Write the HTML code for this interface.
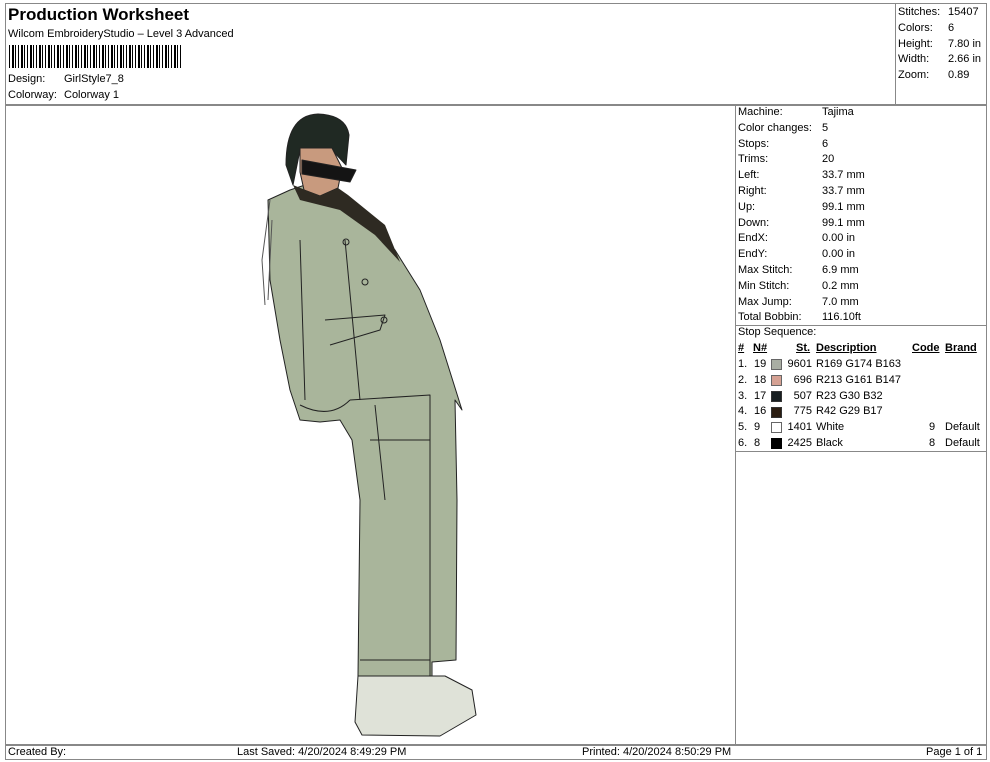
<!DOCTYPE html>
<html><head><meta charset="utf-8"><style>
body{margin:0;background:#fff;font-family:"Liberation Sans",Arial,sans-serif;color:#000}
.a{position:absolute;font-size:11px;white-space:nowrap}
.ln{position:absolute;background:#888}
</style></head><body>
<div style="position:relative;width:990px;height:762px;overflow:hidden">
<div class="ln" style="left:5px;top:3px;width:982px;height:1px"></div>
<div class="ln" style="left:5px;top:3px;width:1px;height:757px"></div>
<div class="ln" style="left:986px;top:3px;width:1px;height:757px"></div>
<div class="ln" style="left:5px;top:759px;width:982px;height:1px"></div>
<div class="ln" style="left:5px;top:104px;width:982px;height:2px"></div>
<div class="ln" style="left:895px;top:3px;width:1px;height:101px"></div>
<div class="ln" style="left:735px;top:104px;width:1px;height:641px"></div>
<div class="ln" style="left:5px;top:744px;width:982px;height:2px"></div>
<div class="ln" style="left:735px;top:325px;width:252px;height:1px"></div>
<div class="ln" style="left:735px;top:451px;width:252px;height:1px"></div>

<div class="a" style="left:8px;top:5px;font-size:17px;font-weight:bold">Production Worksheet</div>
<div class="a" style="left:8px;top:28px">Wilcom EmbroideryStudio – Level 3 Advanced</div>
<div style="position:absolute;left:9px;top:45px;width:173px;height:23px;background:repeating-linear-gradient(90deg,#000 0 1px,#fff 1px 3px,#000 3px 5px,#fff 5px 6px,#000 6px 7px,#fff 7px 9px)"></div>
<div class="a" style="left:8px;top:73px">Design:</div><div class="a" style="left:64px;top:73px">GirlStyle7_8</div>
<div class="a" style="left:8px;top:89px">Colorway:</div><div class="a" style="left:64px;top:89px">Colorway 1</div>

<div class="a" style="left:898px;top:5px;line-height:15.8px">Stitches:<br>Colors:<br>Height:<br>Width:<br>Zoom:</div>
<div class="a" style="left:948px;top:5px;line-height:15.8px">15407<br>6<br>7.80 in<br>2.66 in<br>0.89</div>

<div class="a" style="left:738px;top:105px;line-height:15.8px">Machine:<br>Color changes:<br>Stops:<br>Trims:<br>Left:<br>Right:<br>Up:<br>Down:<br>EndX:<br>EndY:<br>Max Stitch:<br>Min Stitch:<br>Max Jump:<br>Total Bobbin:</div>
<div class="a" style="left:822px;top:105px;line-height:15.8px">Tajima<br>5<br>6<br>20<br>33.7 mm<br>33.7 mm<br>99.1 mm<br>99.1 mm<br>0.00 in<br>0.00 in<br>6.9 mm<br>0.2 mm<br>7.0 mm<br>116.10ft</div>
<div class="a" style="left:738px;top:326px">Stop Sequence:</div>
<div class="a" style="left:738px;top:342px;font-weight:bold;text-decoration:underline">#</div>
<div class="a" style="left:753px;top:342px;font-weight:bold;text-decoration:underline">N#</div>
<div class="a" style="left:796px;top:342px;font-weight:bold;text-decoration:underline">St.</div>
<div class="a" style="left:816px;top:342px;font-weight:bold;text-decoration:underline">Description</div>
<div class="a" style="left:912px;top:342px;font-weight:bold;text-decoration:underline">Code</div>
<div class="a" style="left:945px;top:342px;font-weight:bold;text-decoration:underline">Brand</div>
<div class="a" style="left:738px;top:357px;line-height:15.8px">1.<br>2.<br>3.<br>4.<br>5.<br>6.</div>
<div class="a" style="left:754px;top:357px;line-height:15.8px">19<br>18<br>17<br>16<br>9<br>8</div>
<div class="a" style="left:780px;top:357px;line-height:15.8px;width:32px;text-align:right">9601<br>696<br>507<br>775<br>1401<br>2425</div>
<div class="a" style="left:816px;top:357px;line-height:15.8px">R169 G174 B163<br>R213 G161 B147<br>R23 G30 B32<br>R42 G29 B17<br>White<br>Black</div>
<div class="a" style="left:929px;top:420px;line-height:15.8px">9<br>8</div>
<div class="a" style="left:945px;top:420px;line-height:15.8px">Default<br>Default</div>
<div style="position:absolute;left:771px;top:359px;width:9px;height:9px;background:#a9aea3;border:1px solid #666"></div>
<div style="position:absolute;left:771px;top:375px;width:9px;height:9px;background:#d5a193;border:1px solid #666"></div>
<div style="position:absolute;left:771px;top:391px;width:9px;height:9px;background:#171e20;border:1px solid #333"></div>
<div style="position:absolute;left:771px;top:407px;width:9px;height:9px;background:#2a1d11;border:1px solid #333"></div>
<div style="position:absolute;left:771px;top:422px;width:9px;height:9px;background:#fff;border:1px solid #666"></div>
<div style="position:absolute;left:771px;top:438px;width:9px;height:9px;background:#000;border:1px solid #000"></div>

<div class="a" style="left:8px;top:746px">Created By:</div>
<div class="a" style="left:237px;top:746px">Last Saved: 4/20/2024 8:49:29 PM</div>
<div class="a" style="left:582px;top:746px">Printed: 4/20/2024 8:50:29 PM</div>
<div class="a" style="left:926px;top:746px">Page 1 of 1</div>

<svg style="position:absolute;left:0;top:0" width="990" height="762">
<g stroke="#222" stroke-width="1" stroke-linejoin="round">
<path d="M290 190 L320 180 L360 215 L395 250 L420 290 L440 340 L462 410 L455 400 L457 500 L456 660 L432 662 L432 676 L358 676 L360 500 L352 440 L340 420 L320 422 L300 420 L290 390 L280 340 L270 280 L268 200 Z" fill="#a9b59b"/>
<path d="M350 400 L430 395 L430 676 M300 405 Q330 420 350 400" fill="none"/>
<path d="M286 165 Q286 115 318 114 Q346 115 349 135 L346 165 L330 148 L300 150 L293 185 Z" fill="#202923"/>
<path d="M300 148 L332 148 L342 168 L338 188 L320 196 L304 190 L300 172 Z" fill="#c89a7e"/>
<path d="M302 160 L356 170 L350 182 L302 174 Z" fill="#141414"/>
<path d="M293 185 L300 200 L340 210 L375 235 L400 262 L385 225 L348 195 L338 188 L320 196 Z" fill="#2e2a22" stroke="none"/>
<path d="M270 200 L262 260 L265 305 M272 220 L268 300" fill="none" stroke="#555"/>
<path d="M358 676 L355 722 L362 735 L440 736 L476 715 L472 690 L445 676 Z" fill="#dfe2d8"/>
<path d="M345 240 L360 400 M325 320 L385 315 L380 330 L330 345 M375 405 L385 500 M300 240 L305 400 M370 440 L430 440 M360 660 L430 660" fill="none"/>
<circle cx="346" cy="242" r="3" fill="none"/><circle cx="365" cy="282" r="3" fill="none"/><circle cx="384" cy="320" r="3" fill="none"/>
</g>
</svg>
</div>
</body></html>
